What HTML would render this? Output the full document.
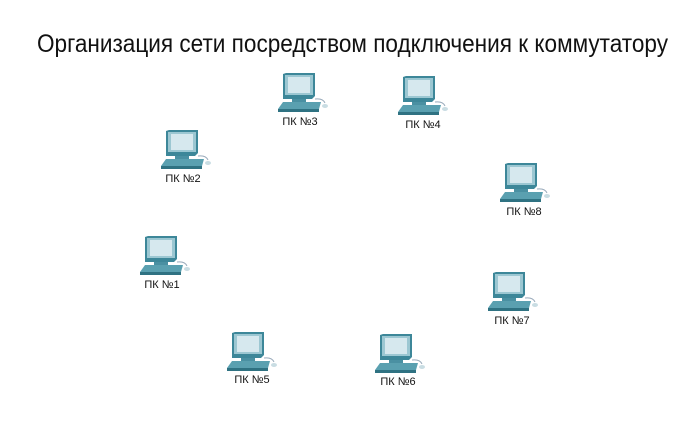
<!DOCTYPE html><html><head><meta charset="utf-8"><style>
body{margin:0;width:691px;height:423px;background:#fff;overflow:hidden;position:relative}
svg{position:absolute;left:0;top:0}
</style></head><body>
<svg width="691" height="423" viewBox="0 0 691 423">
<text x="37" y="52" font-family="Liberation Sans, sans-serif" font-size="25" fill="#111" textLength="631" lengthAdjust="spacingAndGlyphs">Организация сети посредством подключения к коммутатору</text>
<g font-family="Liberation Sans, sans-serif" font-size="11" fill="#111" text-anchor="middle">
<g id="p3" transform="translate(283,73)">
 <path d="M0 1 L3 0 L32 0 L32 23 L29 26 L0 26 Z" fill="#3d8799"/>
 <rect x="2" y="2" width="28" height="20" fill="#9cc7d2"/>
 <rect x="5" y="4" width="22" height="16" fill="#d6e8ee"/>
 <rect x="9" y="26" width="14" height="3" fill="#4a90a2"/>
 <path d="M-5 36 L0 29 L38 29 L36 36 Z" fill="#5aa0b0"/>
 <path d="M-5 36 L36 36 L36 39 L-5 39 Z" fill="#2f7282"/>
 <path d="M32 26 Q40 25 42 30" stroke="#9ab" fill="none"/>
 <ellipse cx="42" cy="33" rx="3" ry="2" fill="#c9dde3"/>
</g>
<use href="#p3" transform="translate(120,3)"/>
<use href="#p3" transform="translate(-117,57)"/>
<use href="#p3" transform="translate(222,90)"/>
<use href="#p3" transform="translate(-138,163)"/>
<use href="#p3" transform="translate(210,199)"/>
<use href="#p3" transform="translate(-51,259)"/>
<use href="#p3" transform="translate(97,261)"/>
<text x="300" y="125">ПК №3</text>
<text x="423" y="128">ПК №4</text>
<text x="183" y="182">ПК №2</text>
<text x="524" y="215">ПК №8</text>
<text x="162" y="288">ПК №1</text>
<text x="512" y="324">ПК №7</text>
<text x="252" y="383">ПК №5</text>
<text x="398" y="385">ПК №6</text>
</g>
</svg>
</body></html>
